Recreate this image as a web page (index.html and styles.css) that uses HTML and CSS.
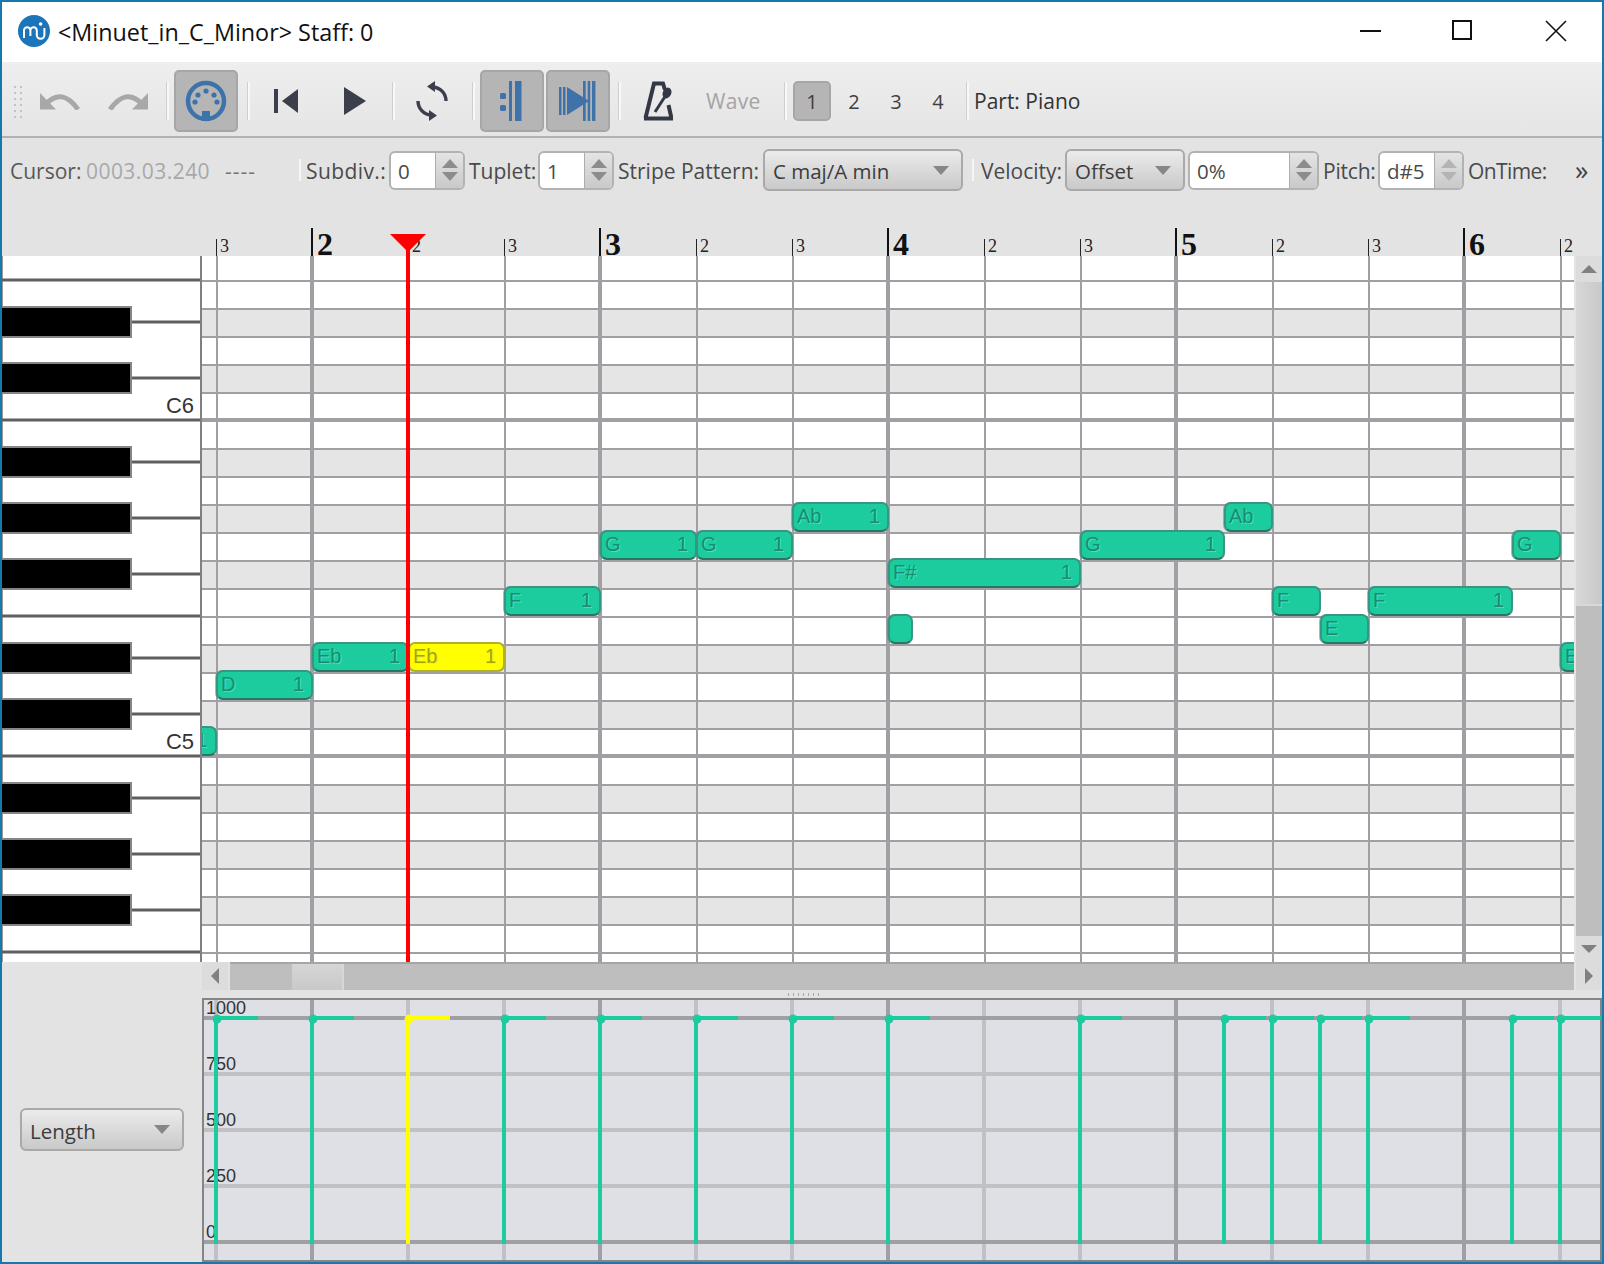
FILE: index.html
```html
<!DOCTYPE html>
<html lang="en">
<head>
<meta charset="utf-8">
<title>Minuet_in_C_Minor</title>
<link rel="stylesheet" href="styles.css">
</head>
<body>
<div class="window">
  <header class="titlebar">
    <svg class="logo" viewBox="0 0 32 32" width="32" height="32">
      <circle cx="16" cy="16" r="16" fill="#1b75b8"/>
      <path d="M6 23V15.5a3.2 3.2 0 0 1 6.4 0V21M12.4 15.5a3.2 3.2 0 0 1 6.4 0V20a3.8 3.8 0 0 0 7.6 0V13" fill="none" stroke="#fff" stroke-width="2"/>
      <circle cx="22.6" cy="9" r="1.8" fill="#fff"/>
    </svg>
    <span class="title-text">&lt;Minuet_in_C_Minor&gt; Staff: 0</span>
    <span class="title-gap"></span>
    <span class="win-btn"><svg viewBox="0 0 22 22" width="22" height="22"><rect y="10" width="21" height="2" fill="#111"/></svg></span>
    <span class="win-btn"><svg viewBox="0 0 22 22" width="22" height="22"><rect x="1" y="1" width="18" height="18" fill="none" stroke="#111" stroke-width="2"/></svg></span>
    <span class="win-btn"><svg viewBox="0 0 22 22" width="22" height="22"><path d="M1 1L21 21M21 1L1 21" stroke="#111" stroke-width="1.6"/></svg></span>
  </header>

  <div class="toolbar">
    <span class="grip"></span>
    <span class="tool tool-undo"><svg viewBox="0 0 42 18" width="42" height="18"><path d="M0 1V17.5H16Z" fill="#a8a8a8"/><path d="M6 12Q22-5 38 17.5" fill="none" stroke="#a8a8a8" stroke-width="5"/></svg></span>
    <span class="tool tool-redo"><svg viewBox="0 0 42 18" width="42" height="18"><g transform="matrix(-1 0 0 1 42 0)"><path d="M0 1V17.5H16Z" fill="#a8a8a8"/><path d="M6 12Q22-5 38 17.5" fill="none" stroke="#a8a8a8" stroke-width="5"/></g></svg></span>
    <span class="sep sep-a"></span>
    <span class="tool tool-on"><svg viewBox="0 0 44 44" width="44" height="44"><circle cx="22" cy="22" r="18" fill="none" stroke="#3d72ab" stroke-width="4.5"/><rect x="18" y="32" width="8" height="10" fill="#3d72ab"/><circle cx="22" cy="12" r="2.6" fill="#3d72ab"/><circle cx="14" cy="16" r="2.6" fill="#3d72ab"/><circle cx="30" cy="16" r="2.6" fill="#3d72ab"/><circle cx="11" cy="23" r="2.6" fill="#3d72ab"/><circle cx="33" cy="23" r="2.6" fill="#3d72ab"/></svg></span>
    <span class="sep sep-b"></span>
    <span class="tool tool-prev"><svg viewBox="0 0 24 24" width="24" height="24"><rect width="4" height="24" fill="#3b3f4b"/><path d="M24 0V24L8 12Z" fill="#3b3f4b"/></svg></span>
    <span class="tool tool-play"><svg viewBox="0 0 22 28" width="22" height="28"><path d="M0 0V28L22 14Z" fill="#3b3f4b"/></svg></span>
    <span class="sep sep-c"></span>
    <span class="tool tool-loop"><svg viewBox="0 0 36 46" width="36" height="46"><path d="M32 23A14 14 0 0 0 19 9" fill="none" stroke="#3b3f4b" stroke-width="3.4"/><path d="M13 8.5L21 3V14Z" fill="#3b3f4b"/><g transform="rotate(180 18 23)"><path d="M32 23A14 14 0 0 0 19 9" fill="none" stroke="#3b3f4b" stroke-width="3.4"/><path d="M13 8.5L21 3V14Z" fill="#3b3f4b"/></g></svg></span>
    <span class="sep sep-d"></span>
    <span class="tool tool-on"><svg viewBox="0 0 26 40" width="26" height="40"><rect x="1" y="12" width="6" height="6" rx="1.5" fill="#3f72a9"/><rect x="1" y="24" width="6" height="6" rx="1.5" fill="#3f72a9"/><rect x="10" width="3" height="40" fill="#3f72a9"/><rect x="16" width="6.5" height="40" fill="#3f72a9"/></svg></span>
    <span class="tool tool-on tool-on-b"><svg viewBox="0 0 38 40" width="38" height="40"><rect y="6" width="2.5" height="28" fill="#3f72a9"/><rect x="4" y="6" width="2.5" height="28" fill="#3f72a9"/><rect x="24" width="2.7" height="40" fill="#3f72a9"/><rect x="28.7" width="2.5" height="40" fill="#3f72a9"/><rect x="33" width="3.4" height="40" fill="#3f72a9"/><path d="M8 6V34L30 20Z" fill="#3f72a9"/></svg></span>
    <span class="sep sep-e"></span>
    <span class="tool tool-metro"><svg viewBox="0 0 30 40" width="30" height="40"><path d="M2.5 37L11 2.5H20L22 9M1 37.5H28.5L25.5 24" fill="none" stroke="#333844" stroke-width="4"/><path d="M12 31L23 14" stroke="#333844" stroke-width="3"/><ellipse cx="24" cy="12" rx="4.2" ry="5.6" transform="rotate(25 24 12)" fill="#333844"/></svg></span>
    <span class="tool-wave">Wave</span>
    <span class="sep sep-f"></span>
    <span class="voice voice-on">1</span>
    <span class="voice">2</span>
    <span class="voice">3</span>
    <span class="voice">4</span>
    <span class="sep sep-g"></span>
    <span class="part">Part: Piano</span>
  </div>

  <div class="options">
    <span class="lbl lbl-cursor">Cursor:</span>
    <span class="lbl val-time">0003.03.240</span>
    <span class="lbl val-dash">----</span>
    <span class="opt-sep"></span>
    <span class="lbl lbl-subdiv">Subdiv.:</span>
    <div class="spin spin-sm"><span class="spin-val">0</span><span class="spin-arrows"><i class="up"></i><i class="down"></i></span></div>
    <span class="lbl lbl-tuplet">Tuplet:</span>
    <div class="spin spin-sm"><span class="spin-val">1</span><span class="spin-arrows"><i class="up"></i><i class="down"></i></span></div>
    <span class="lbl lbl-stripe">Stripe Pattern:</span>
    <div class="combo combo-stripe"><span>C maj/A min</span><i class="combo-arrow"></i></div>
    <span class="opt-sep opt-sep-b"></span>
    <span class="lbl lbl-velocity">Velocity:</span>
    <div class="combo combo-offset"><span>Offset</span><i class="combo-arrow"></i></div>
    <div class="spin spin-pct"><span class="spin-val">0%</span><span class="spin-arrows"><i class="up"></i><i class="down"></i></span></div>
    <span class="lbl lbl-pitch">Pitch:</span>
    <div class="spin spin-pitch"><span class="spin-val">d#5</span><span class="spin-arrows spin-off"><i class="up"></i><i class="down"></i></span></div>
    <span class="lbl lbl-ontime">OnTime:</span>
    <span class="more">»</span>
  </div>

  <div class="ruler">
    <span class="tick">3</span>
    <span class="tick tick-bar">2</span>
    <span class="tick">2</span>
    <span class="tick">3</span>
    <span class="tick tick-bar">3</span>
    <span class="tick">2</span>
    <span class="tick">3</span>
    <span class="tick tick-bar">4</span>
    <span class="tick">2</span>
    <span class="tick">3</span>
    <span class="tick tick-bar">5</span>
    <span class="tick">2</span>
    <span class="tick">3</span>
    <span class="tick tick-bar">6</span>
    <span class="tick tick-last">2</span>
    <svg class="playhead" viewBox="0 0 36 22" width="36" height="22"><path d="M0 0H36L18 18Z" fill="#ff0000"/><rect x="16" y="16" width="4" height="6" fill="#ff0000"/></svg>
  </div>

  <div class="roll">
    <svg class="piano" viewBox="2 256 200 706" width="200" height="706">
      <rect x="2" y="256" width="200" height="706" fill="#fff"/>
      <rect x="2" y="256" width="1" height="706" fill="#999"/>
      <g class="key-lines">
        <path d="M2 280H200M2 420H200M2 616H200M2 756H200M2 952H200"/>
        <path d="M130 322H200M130 378H200M130 462H200M130 518H200M130 574H200M130 658H200M130 714H200M130 798H200M130 854H200M130 910H200"/>
      </g>
      <g class="black-keys">
        <rect x="0" y="307" width="131" height="30"/>
        <rect x="0" y="363" width="131" height="30"/>
        <rect x="0" y="447" width="131" height="30"/>
        <rect x="0" y="503" width="131" height="30"/>
        <rect x="0" y="559" width="131" height="30"/>
        <rect x="0" y="643" width="131" height="30"/>
        <rect x="0" y="699" width="131" height="30"/>
        <rect x="0" y="783" width="131" height="30"/>
        <rect x="0" y="839" width="131" height="30"/>
        <rect x="0" y="895" width="131" height="30"/>
      </g>
      <rect x="200" y="256" width="2" height="706" fill="#808080"/>
      <text class="key-name" x="194" y="413">C6</text>
      <text class="key-name" x="194" y="749">C5</text>
    </svg>

    <div class="grid">
      <div class="row-top"></div>
      <div class="row"></div>
      <div class="row row-g"></div>
      <div class="row"></div>
      <div class="row row-g"></div>
      <div class="row"></div>
      <div class="row row-c"></div>
      <div class="row row-g"></div>
      <div class="row"></div>
      <div class="row row-g"></div>
      <div class="row"></div>
      <div class="row row-g"></div>
      <div class="row"></div>
      <div class="row"></div>
      <div class="row row-g"></div>
      <div class="row"></div>
      <div class="row row-g"></div>
      <div class="row"></div>
      <div class="row row-c"></div>
      <div class="row row-g"></div>
      <div class="row"></div>
      <div class="row row-g"></div>
      <div class="row"></div>
      <div class="row row-g"></div>
      <div class="row"></div>
      <div class="row"></div>
      <div class="beats"></div>

      <div class="note note-cut" style="left:-82px;top:470px;width:97px"><span></span><span>1</span></div>
      <div class="note" style="left:14px;top:414px;width:97px"><span>D</span><span>1</span></div>
      <div class="note" style="left:110px;top:386px;width:97px"><span>Eb</span><span>1</span></div>
      <div class="note note-sel" style="left:206px;top:386px;width:97px"><span>Eb</span><span>1</span></div>
      <div class="note" style="left:302px;top:330px;width:97px"><span>F</span><span>1</span></div>
      <div class="note" style="left:398px;top:274px;width:97px"><span>G</span><span>1</span></div>
      <div class="note" style="left:494px;top:274px;width:97px"><span>G</span><span>1</span></div>
      <div class="note" style="left:590px;top:246px;width:97px"><span>Ab</span><span>1</span></div>
      <div class="note" style="left:686px;top:302px;width:193px"><span>F#</span><span>1</span></div>
      <div class="note" style="left:686px;top:358px;width:25px"></div>
      <div class="note" style="left:878px;top:274px;width:145px"><span>G</span><span>1</span></div>
      <div class="note" style="left:1022px;top:246px;width:49px"><span>Ab</span></div>
      <div class="note" style="left:1070px;top:330px;width:49px"><span>F</span></div>
      <div class="note" style="left:1118px;top:358px;width:49px"><span>E</span></div>
      <div class="note" style="left:1166px;top:330px;width:145px"><span>F</span><span>1</span></div>
      <div class="note" style="left:1310px;top:274px;width:49px"><span>G</span></div>
      <div class="note" style="left:1358px;top:386px;width:49px"><span>E</span></div>

      <div class="red-line"></div>
    </div>

    <div class="vscroll">
      <span class="sb-btn"><i class="sb-up"></i></span>
      <span class="vthumb"></span>
      <span class="vtrack"></span>
      <span class="sb-btn"><i class="sb-down"></i></span>
    </div>
  </div>

  <div class="lower">
    <div class="lower-left">
      <div class="combo combo-length"><span>Length</span><i class="combo-arrow"></i></div>
    </div>
    <div class="lower-right">
      <div class="hscroll">
        <span class="sb-btn sb-btn-h"><i class="sb-left"></i></span>
        <div class="htrack"><span class="hthumb"></span></div>
        <span class="sb-btn sb-btn-h"><i class="sb-right"></i></span>
      </div>
      <div class="splitter"><span class="splitter-dots"></span></div>
      <svg class="graph" viewBox="202 998 1400 264" width="1400" height="264">
        <rect x="202" y="998" width="1400" height="264" fill="#dfe0e5"/>
        <g class="g-light">
          <path d="M204 1074H1600M204 1130H1600M204 1186H1600"/>
          <path d="M216 1000V1260M408 1000V1260M504 1000V1260M696 1000V1260M792 1000V1260M984 1000V1260M1080 1000V1260M1272 1000V1260M1368 1000V1260M1560 1000V1260"/>
        </g>
        <g class="g-dark">
          <path d="M312 1000V1260M600 1000V1260M888 1000V1260M1176 1000V1260M1464 1000V1260"/>
          <path d="M204 1018H1600M204 1242H1600"/>
        </g>
        <path class="g-frame" d="M203 1262V999H1601V1262M202 1261H1602"/>
        <g class="g-label">
          <text x="206" y="1014">1000</text>
          <text x="206" y="1070">750</text>
          <text x="206" y="1126">500</text>
          <text x="206" y="1182">250</text>
          <text x="206" y="1238">0</text>
        </g>
        <g class="g-teal">
          <path d="M216 1018V1244M216 1018H258M312 1018V1244M312 1018H354M504 1018V1244M504 1018H546M600 1018V1244M600 1018H642M696 1018V1244M696 1018H738M792 1018V1244M792 1018H834M888 1018V1244M888 1018H930M1080 1018V1244M1080 1018H1122M1224 1018V1244M1224 1018H1266M1272 1018V1244M1272 1018H1314M1320 1018V1244M1320 1018H1362M1368 1018V1244M1368 1018H1410M1512 1018V1244M1512 1018H1554M1560 1018V1244M1560 1018H1601"/>
        </g>
        <g class="g-head">
          <circle cx="217" cy="1019" r="4.5"/><circle cx="313" cy="1019" r="4.5"/><circle cx="505" cy="1019" r="4.5"/><circle cx="601" cy="1019" r="4.5"/><circle cx="697" cy="1019" r="4.5"/><circle cx="793" cy="1019" r="4.5"/><circle cx="889" cy="1019" r="4.5"/><circle cx="1081" cy="1019" r="4.5"/><circle cx="1225" cy="1019" r="4.5"/><circle cx="1273" cy="1019" r="4.5"/><circle cx="1321" cy="1019" r="4.5"/><circle cx="1369" cy="1019" r="4.5"/><circle cx="1513" cy="1019" r="4.5"/><circle cx="1561" cy="1019" r="4.5"/>
        </g>
        <path class="g-yellow" d="M408 1018V1244M408 1018H450"/>
        <circle class="g-yellow-head" cx="409" cy="1019" r="4.5"/>
      </svg>
    </div>
  </div>
</div>
</body>
</html>
```

FILE: styles.css
```css
* { box-sizing: border-box; }
html, body { margin: 0; padding: 0; background: #e3e3e3; }
body { width: 1604px; height: 1264px; overflow: hidden; font-family: "Open Sans", "Liberation Sans", sans-serif; }

.window { width: 1604px; height: 1264px; border: 2px solid #1a77ab; overflow: hidden; background: #e3e3e3; display: flex; flex-direction: column; }

/* Title bar */
.titlebar { height: 60px; flex: none; display: flex; align-items: center; background: #fff; padding-left: 16px; }
.logo { flex: none; margin-top: -3px; }
.title-text { margin-left: 8px; font-size: 23.35px; color: #111; white-space: nowrap; }
.title-gap { flex: 1; }
.win-btn { flex: none; width: 92.5px; height: 60px; display: flex; align-items: center; justify-content: center; padding-bottom: 2px; }

/* Toolbar */
.toolbar { height: 76px; flex: none; display: flex; align-items: center; background: linear-gradient(#eeeeee, #e5e5e5); border-bottom: 2px solid #b2b2b2; padding-top: 3px; }
.grip { flex: none; width: 10px; height: 34px; margin-left: 10px; background-image: radial-gradient(circle, #c2c2c2 1.2px, transparent 1.5px); background-size: 6px 6px; }
.tool { flex: none; display: flex; align-items: center; justify-content: center; }
.tool-undo { width: 66px; margin-left: 6px; }
.tool-redo { width: 66px; }
.tool-on { width: 64px; height: 62px; background: #b5b5b5; border: 2px solid #a6a6a6; border-radius: 5px; }
.tool-on-b { margin-left: 2px; }
.tool-prev { width: 72px; }
.tool-play { width: 66px; }
.tool-loop { width: 73px; }
.tool-metro { width: 74px; }
.tool-wave { flex: none; width: 55px; margin-left: 11px; padding-top: 1px; font-size: 21px; letter-spacing: 0.3px; color: #a4a4a4; white-space: nowrap; }
.sep { flex: none; width: 3px; height: 38px; background: linear-gradient(90deg, #cfcfcf 0 1px, #f8f8f8 1px); }
.sep-a { margin: 0 5px 0 6px; }
.sep-b { margin: 0 0 0 9px; }
.sep-c { margin-left: 4px; }
.sep-d { margin: 0 5px 0 4px; }
.sep-e { margin-left: 8px; }
.sep-f { margin: 0 6px 0 23px; }
.sep-g { margin: 0 5px 0 7px; }
.voice { flex: none; width: 42px; height: 40px; display: flex; align-items: center; justify-content: center; padding-top: 1px; font-size: 20px; color: #3f3f3f; }
.voice-on { width: 38px; margin-right: 2px; background: #b5b5b5; border: 2px solid #a6a6a6; border-radius: 5px; }
.part { padding-top: 1px; font-size: 21px; color: #333; white-space: nowrap; }

/* Options bar */
.options { height: 64px; flex: none; display: flex; align-items: center; }
.lbl { flex: none; padding-top: 2px; font-size: 21px; color: #4a4a4a; white-space: nowrap; }
.lbl-cursor { margin-left: 8px; width: 76px; color: #585858; }
.val-time { width: 139px; letter-spacing: 0.45px; color: #a8a8a8; }
.val-dash { width: 74px; letter-spacing: 1px; color: #777; }
.opt-sep { flex: none; width: 2px; height: 22px; background: #f6f6f6; }
.opt-sep-b { margin-left: 9px; }
.lbl-subdiv { margin-left: 5px; width: 83px; letter-spacing: 0.4px; }
.lbl-tuplet { margin-left: 4px; width: 69px; }
.lbl-stripe { margin-left: 4px; width: 145px; }
.lbl-velocity { margin-left: 7px; width: 84px; }
.lbl-pitch { margin-left: 4px; width: 55px; letter-spacing: -0.2px; }
.lbl-ontime { margin-left: 4px; width: 107px; letter-spacing: -0.6px; }
.more { flex: none; font-size: 27px; line-height: 30px; color: #444; }

.spin { flex: none; height: 39px; display: flex; background: #fff; border: 2px solid #b2b2b2; border-radius: 6px; overflow: hidden; }
.spin-sm { width: 76px; }
.spin-pct { width: 131px; margin-left: 3px; }
.spin-pitch { width: 86px; }
.spin-val { flex: 1; padding: 2px 0 0 7px; display: flex; align-items: center; font-size: 20.5px; color: #4a4a4a; }
.spin-arrows { flex: none; width: 28px; display: flex; flex-direction: column; align-items: center; justify-content: center; gap: 4px; background: linear-gradient(#e4e4e4, #c9c9c9); border-left: 1px solid #adadad; }
.up { width: 0; height: 0; border-left: 8px solid transparent; border-right: 8px solid transparent; border-bottom: 9px solid #8c8c8c; }
.down { width: 0; height: 0; border-left: 8px solid transparent; border-right: 8px solid transparent; border-top: 9px solid #8c8c8c; }
.spin-off .up { border-bottom-color: #b4b4b4; }
.spin-off .down { border-top-color: #b4b4b4; }

.combo { flex: none; height: 42px; display: flex; align-items: center; justify-content: space-between; padding: 0 12px 0 8px; background: linear-gradient(#ebebeb, #c9c9c9); border: 2px solid #a9a9a9; border-radius: 6px; font-size: 20.5px; color: #3c3c3c; white-space: nowrap; }
.combo span { padding-top: 2px; }
.combo-stripe { width: 200px; }
.combo-offset { width: 120px; }
.combo-length { width: 164px; height: 43px; margin-left: 18px; }
.combo-arrow { flex: none; width: 0; height: 0; border-left: 8px solid transparent; border-right: 8px solid transparent; border-top: 9px solid #868686; }

/* Ruler */
.ruler { position: relative; height: 54px; flex: none; display: flex; padding-left: 214px; }
.tick { position: relative; flex: none; width: 96px; padding: 35px 0 0 4px; font: 18px/18px "Liberation Serif", serif; color: #222; }
.tick::before { content: ""; position: absolute; left: 0; bottom: 0; width: 1px; height: 17px; background: #222; }
.tick-bar { padding: 27px 0 0 5px; font: bold 32px/30px "Liberation Serif", serif; color: #111; }
.tick-bar::before { left: -1px; width: 2px; height: 28px; background: #111; }
.tick-last { width: 42px; }
.playhead { position: absolute; left: 388px; top: 32px; }

/* Piano roll */
.roll { height: 706px; flex: none; display: flex; }
.piano { flex: none; display: block; }
.key-lines path { stroke: #5f5f5f; stroke-width: 3; fill: none; }
.black-keys rect { fill: #000; stroke: #858585; stroke-width: 2; }
.key-name { font: 22px "Liberation Sans", sans-serif; fill: #333; text-anchor: end; }

.grid { position: relative; width: 1372px; flex: none; overflow: hidden; background: #fff; }
.row-top { height: 24px; }
.row { height: 28px; border-top: 2px solid #a0a0a4; background: #fff; }
.row-g { background: #e5e5e5; }
.row-c { box-shadow: 0 -2px 0 #a0a0a4; }
.beats { position: absolute; inset: 0; background: repeating-linear-gradient(90deg, transparent 0 14px, #a0a0a4 14px 16px, transparent 16px 108px, #a0a0a4 108px 112px, transparent 112px 206px, #a0a0a4 206px 208px, transparent 208px 288px); }

.note { position: absolute; height: 30px; display: flex; align-items: center; justify-content: space-between; padding: 0 7px 2px 3px; background: #1ccc9f; border: 2px solid #3a9480; border-bottom-color: #2b7563; border-radius: 7px; box-shadow: -1px 0 0 rgba(58, 148, 128, 0.55); font: 20px/1 "Liberation Sans", sans-serif; color: #1f8a70; text-shadow: 1px 1px 0 #34e8bc; }
.note-cut { padding-right: 8px; }
.note-sel { background: #ffff00; border-color: #b0b02a; box-shadow: none; color: #a4a400; text-shadow: 1px 1px 0 #eeee44; }
.red-line { position: absolute; left: 204px; top: 0; bottom: 0; width: 4px; background: #ff0000; }

/* Scrollbars */
.vscroll { flex: none; width: 26px; margin-left: 2px; display: flex; flex-direction: column; background: #bebebe; }
.sb-btn { flex: none; height: 26px; display: flex; align-items: center; justify-content: center; background: #dcdcdc; }
.sb-btn-h { width: 26px; height: 28px; }
.vthumb { flex: none; height: 324px; background: linear-gradient(90deg, #d8d8d8, #c8c8c8); border-bottom: 2px solid #d8d8d8; }
.vtrack { flex: 1; background: #bebebe; }
.sb-up { width: 0; height: 0; border-left: 8px solid transparent; border-right: 8px solid transparent; border-bottom: 8px solid #808080; }
.sb-down { width: 0; height: 0; border-left: 8px solid transparent; border-right: 8px solid transparent; border-top: 8px solid #808080; }
.sb-left { width: 0; height: 0; border-top: 8px solid transparent; border-bottom: 8px solid transparent; border-right: 8px solid #808080; }
.sb-right { width: 0; height: 0; border-top: 8px solid transparent; border-bottom: 8px solid transparent; border-left: 8px solid #808080; }

.lower { flex: 1; display: flex; min-height: 0; }
.lower-left { flex: none; width: 200px; display: flex; align-items: center; padding-top: 35px; background: #e3e3e3; }
.lower-right { flex: none; width: 1400px; display: flex; flex-direction: column; }
.hscroll { flex: none; height: 28px; display: flex; }
.htrack { flex: none; width: 1344px; margin: 0 2px; background: #bebebe; border-top: 2px solid #a6a6a6; padding-left: 62px; }
.hthumb { display: block; width: 52px; height: 26px; background: linear-gradient(#d6d6d6, #c9c9c9); border-right: 2px solid #d8d8d8; }
.splitter { flex: none; height: 8px; padding-right: 196px; display: flex; align-items: center; justify-content: center; }
.splitter-dots { width: 32px; height: 3px; background: repeating-linear-gradient(90deg, #a9a9a9 0 1px, transparent 1px 5px); }

/* Graph */
.graph { flex: none; display: block; }
.g-light path { stroke: #c0c0c5; stroke-width: 4; fill: none; }
.g-dark path { stroke: #a0a0a4; stroke-width: 4; fill: none; }
.g-frame { stroke: #858585; stroke-width: 2; fill: none; }
.g-label text { font: 18px "Liberation Sans", sans-serif; fill: #333; }
.g-teal path { stroke: #1ccc9f; stroke-width: 4; fill: none; }
.g-head circle { fill: #1ccc9f; }
.g-yellow { stroke: #ffff00; stroke-width: 4; fill: none; }
.g-yellow-head { fill: #ffff00; }
```
